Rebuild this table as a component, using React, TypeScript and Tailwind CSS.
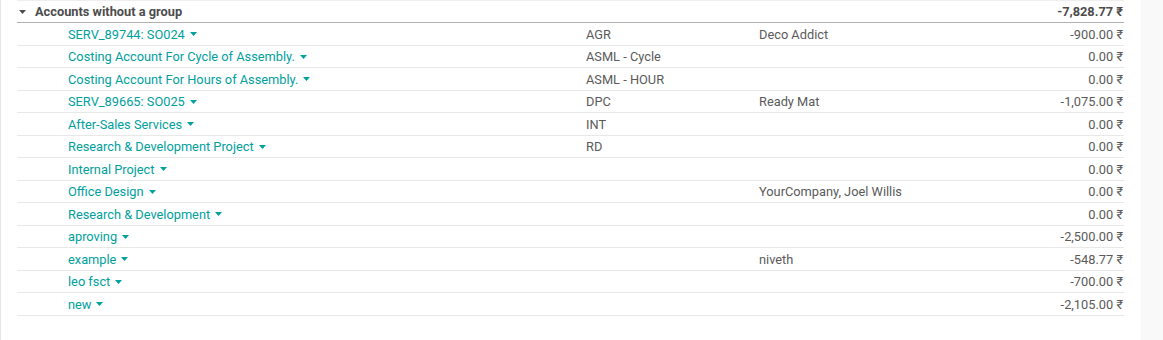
const rows = [
  { name: "SERV_89744: SO024", code: "AGR", partner: "Deco Addict", amount: "-900.00" },
  { name: "Costing Account For Cycle of Assembly.", code: "ASML - Cycle", partner: "", amount: "0.00" },
  { name: "Costing Account For Hours of Assembly.", code: "ASML - HOUR", partner: "", amount: "0.00" },
  { name: "SERV_89665: SO025", code: "DPC", partner: "Ready Mat", amount: "-1,075.00" },
  { name: "After-Sales Services", code: "INT", partner: "", amount: "0.00" },
  { name: "Research & Development Project", code: "RD", partner: "", amount: "0.00" },
  { name: "Internal Project", code: "", partner: "", amount: "0.00" },
  { name: "Office Design", code: "", partner: "YourCompany, Joel Willis", amount: "0.00" },
  { name: "Research & Development", code: "", partner: "", amount: "0.00" },
  { name: "aproving", code: "", partner: "", amount: "-2,500.00" },
  { name: "example", code: "", partner: "niveth", amount: "-548.77" },
  { name: "leo fsct", code: "", partner: "", amount: "-700.00" },
  { name: "new", code: "", partner: "", amount: "-2,105.00" },
];

function Caret({ className }: { className: string }) {
  return (
    <svg width="7" height="4" viewBox="0 0 7 4" className={className}>
      <path d="M0 0h7L3.5 4z" fill="currentColor" />
    </svg>
  );
}

export default function App() {
  return (
    <div
      className="flex w-[1163px] h-[340px] bg-[#f9f9f9] text-[12.8px] text-[#5a5a5a]"
      style={{ fontFamily: "Roboto, 'Noto Sans', sans-serif" }}
    >
      <div className="w-[1141px] h-full bg-white border-l border-[#e5e5e5] pl-[16px] pr-[17px]">
        {/* group header */}
        <div className="flex items-center h-[23px] border-t border-[#eeeeee] border-b border-b-[#b0b0b0] text-[#4c4c4c]">
          <Caret className="ml-[2px] mr-[9px]" />
          <span className="flex-1 font-bold">Accounts without a group</span>
          <span className="font-bold pr-[1px]">-7,828.77 ₹</span>
        </div>

        {rows.map((r) => (
          <div key={r.name} className="flex items-center h-[22.5px] pt-[1px] border-b border-[#e8e8e8]">
            <div className="w-[569px] pl-[51px] flex items-center text-[#00a09d]">
              <span>{r.name}</span>
              <Caret className="ml-[5px] text-[#00a09d]" />
            </div>
            <div className="w-[173px]">{r.code}</div>
            <div className="flex-1">{r.partner}</div>
            <div className="pr-[1px]">{r.amount} ₹</div>
          </div>
        ))}
      </div>
    </div>
  );
}
